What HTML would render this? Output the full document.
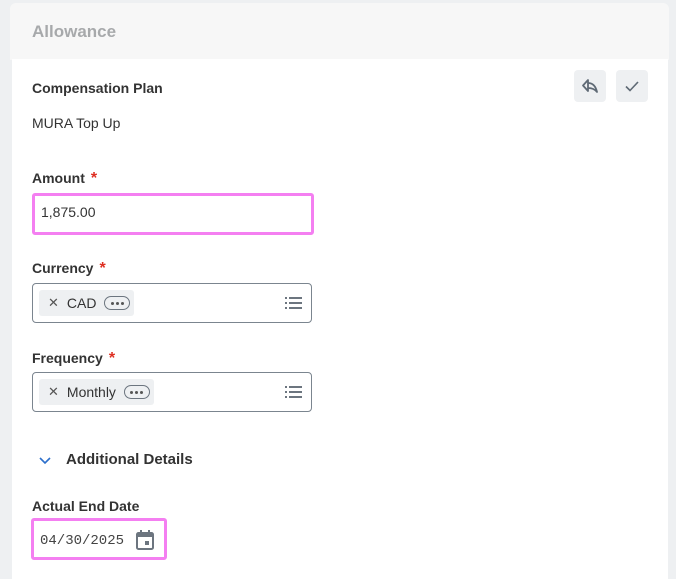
<!DOCTYPE html>
<html><head><style>
*{box-sizing:border-box;margin:0;padding:0}
body{width:676px;height:573px;background:#eef0f2;font-family:"Liberation Sans",Arial,sans-serif;position:relative;overflow:hidden;color:#333}
.hdr{position:absolute;left:10px;top:3px;width:659px;height:57px;background:#f7f7f7;border-radius:6px 6px 0 0}
.hdr span{position:absolute;left:22px;top:19px;font-size:17px;font-weight:bold;color:#a7a9ab}
.body{position:absolute;left:12px;top:59px;width:656px;height:520px;background:#fff}
.a{position:absolute;font-size:14px;white-space:nowrap}
.lbl{font-weight:bold;color:#333;font-size:14px}
.star{color:#de2e21;margin-left:6px;font-size:16px}
.btn{position:absolute;top:70px;width:32px;height:32px;background:#eef0f2;border-radius:4px}
.sel{position:absolute;left:32px;width:280px;height:40px;border:1px solid #7b858f;border-radius:4px}
.pill{position:absolute;left:6px;top:6px;height:26px;background:#eef0f2;border-radius:3px;font-size:14px;display:flex;align-items:center;padding:0 4px 0 9px;color:#333;white-space:nowrap}
.pill .x{color:#555;margin-right:8px;font-size:13px}
.dots{width:26px;height:14px;border:1.5px solid #6c757f;border-radius:8px;margin-left:8px;display:flex;align-items:center;justify-content:center;gap:2px}
.dots i{width:3px;height:3px;border-radius:50%;background:#555;display:block}
.pink{position:absolute;border:3px solid #f47ff1;border-radius:3px}
</style></head><body>
<div class="hdr"><span>Allowance</span></div>
<div class="body"></div>
<div class="a lbl" style="left:32px;top:80px">Compensation Plan</div>
<div class="a" style="left:32px;top:115px;color:#333">MURA Top Up</div>
<div class="btn" style="left:574px"><svg width="32" height="32" viewBox="0 0 32 32"><path d="M14 10 L9 15.5 L14 21 Z" fill="none" stroke="#5f6a75" stroke-width="1.8" stroke-linejoin="round"/><path d="M14 13 Q21 13 23 22 Q20 18 14 18" fill="none" stroke="#5f6a75" stroke-width="1.8" stroke-linejoin="round"/></svg></div>
<div class="btn" style="left:616px"><svg width="32" height="32" viewBox="0 0 32 32"><path d="M10 16.5 L14 20.5 L22 12" fill="none" stroke="#5f6a75" stroke-width="1.6"/></svg></div>
<div class="a lbl" style="left:32px;top:170px">Amount<span class="star">*</span></div>
<div class="pink" style="left:32px;top:193px;width:282px;height:42px"></div>
<div class="a" style="left:41px;top:204px;color:#333">1,875.00</div>
<div class="a lbl" style="left:32px;top:260px">Currency<span class="star">*</span></div>
<div class="sel" style="top:283px"><div class="pill"><span class="x">✕</span>CAD<span class="dots"><i></i><i></i><i></i></span></div>
<svg style="position:absolute;right:8px;top:11px" width="18" height="16" viewBox="0 0 18 16"><g fill="#6c757f"><rect x="0" y="2" width="2" height="2"/><rect x="4" y="2" width="13" height="2"/><rect x="0" y="7" width="2" height="2"/><rect x="4" y="7" width="13" height="2"/><rect x="0" y="12" width="2" height="2"/><rect x="4" y="12" width="13" height="2"/></g></svg></div>
<div class="a lbl" style="left:32px;top:350px">Frequency<span class="star">*</span></div>
<div class="sel" style="top:372px"><div class="pill"><span class="x">✕</span>Monthly<span class="dots"><i></i><i></i><i></i></span></div>
<svg style="position:absolute;right:8px;top:11px" width="18" height="16" viewBox="0 0 18 16"><g fill="#6c757f"><rect x="0" y="2" width="2" height="2"/><rect x="4" y="2" width="13" height="2"/><rect x="0" y="7" width="2" height="2"/><rect x="4" y="7" width="13" height="2"/><rect x="0" y="12" width="2" height="2"/><rect x="4" y="12" width="13" height="2"/></g></svg></div>
<svg style="position:absolute;left:38px;top:455px" width="14" height="10" viewBox="0 0 14 10"><path d="M2 3 L7 8 L12 3" fill="none" stroke="#2c6fcb" stroke-width="1.6"/></svg>
<div class="a" style="left:66px;top:451px;font-size:15px;font-weight:bold;color:#333">Additional Details</div>
<div class="a lbl" style="left:32px;top:498px">Actual End Date</div>
<div class="pink" style="left:31px;top:518px;width:136px;height:42px"></div>
<div class="a" style="left:40px;top:533px;font-family:'Liberation Mono',monospace;font-size:14px;color:#444">04/30/2025</div>
<svg style="position:absolute;left:135px;top:529px" width="20" height="22" viewBox="0 0 20 22"><rect x="2" y="4" width="16" height="16" rx="1.5" fill="none" stroke="#6c757f" stroke-width="2"/><rect x="2" y="4" width="16" height="4" fill="#6c757f"/><rect x="5" y="1" width="2" height="4" fill="#6c757f"/><rect x="13" y="1" width="2" height="4" fill="#6c757f"/><rect x="10" y="12" width="4" height="4" fill="#6c757f"/></svg>
</body></html>
